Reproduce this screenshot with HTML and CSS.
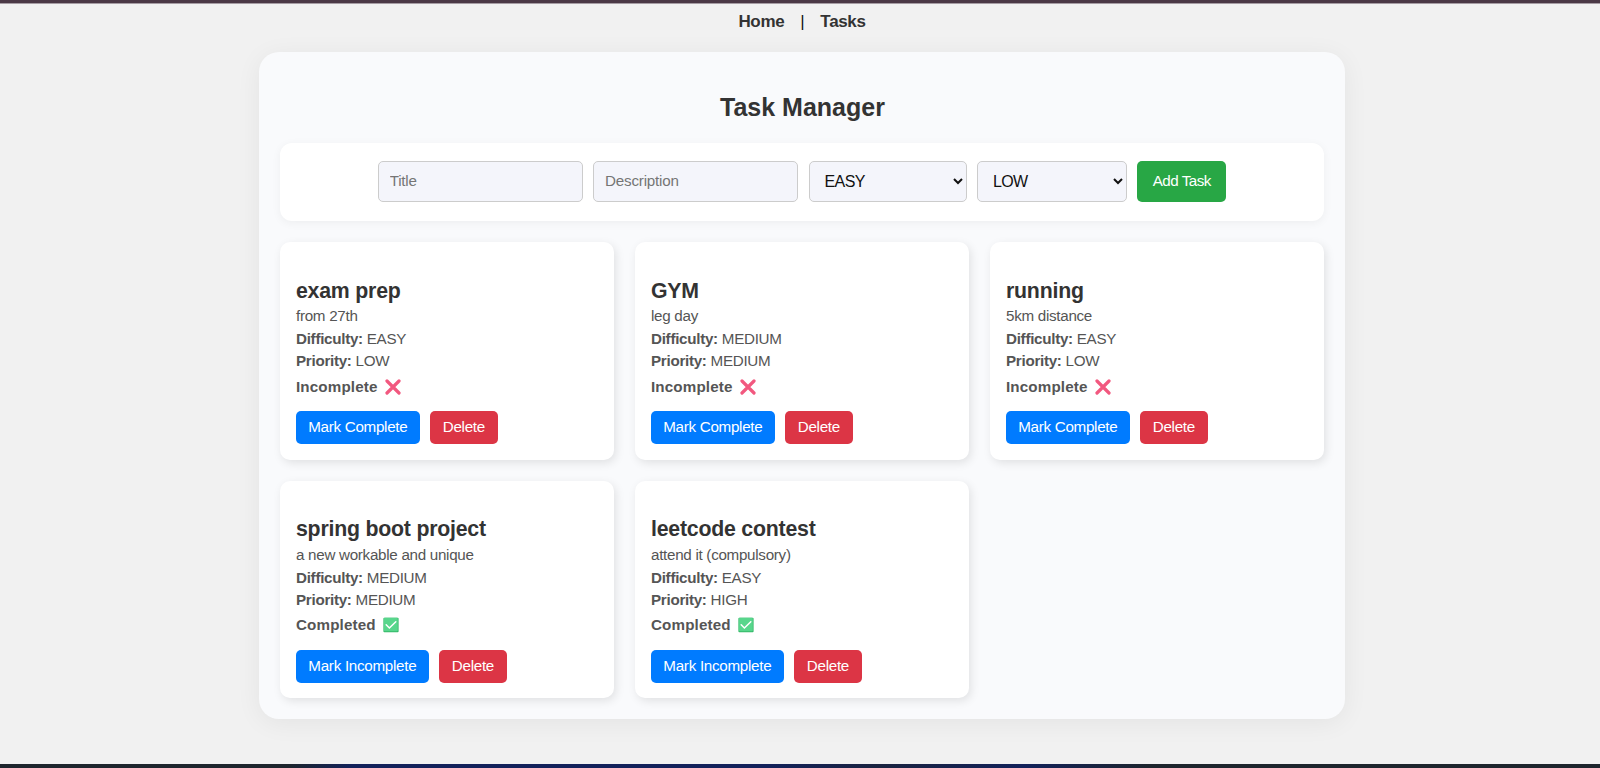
FILE: index.html
```html
<!DOCTYPE html>
<html lang="en">
<head>
<meta charset="utf-8">
<title>Task Manager</title>
<link rel="stylesheet" href="styles.css">
</head>
<body>
<svg class="symbols" aria-hidden="true">
  <symbol id="cross" viewBox="0 0 16 16"><path d="M2 2 14 14M14 2 2 14" fill="none" stroke="#f2587f" stroke-width="3.2" stroke-linecap="round"/></symbol>
  <symbol id="check" viewBox="0 0 16 16"><rect x=".4" y=".8" width="15.2" height="14.4" rx="1" fill="#35b869"/><rect x=".9" y=".8" width="13.9" height="13.4" rx="1" fill="#58d68c"/><path d="M3.2 7.8 6.4 11 12.8 4.8" fill="none" stroke="#fff" stroke-width="1.5" stroke-linecap="round"/></symbol>
</svg>
<div class="top-edge"></div>
<nav class="nav"><a>Home</a><span>|</span><a>Tasks</a></nav>
<main class="panel">
  <h2 class="title">Task Manager</h2>
  <form class="form">
    <input class="field text" placeholder="Title">
    <input class="field text" placeholder="Description">
    <select class="field difficulty"><option>EASY</option></select>
    <select class="field priority"><option>LOW</option></select>
    <button class="add" type="button">Add Task</button>
  </form>
  <section class="grid">
    <article class="card">
      <h3>exam prep</h3>
      <p>from 27th</p>
      <p><strong>Difficulty:</strong> EASY</p>
      <p><strong>Priority:</strong> LOW</p>
      <p class="status">Incomplete <svg class="icon"><use href="#cross"/></svg></p>
      <div class="actions"><button class="btn mark">Mark Complete</button><button class="btn delete">Delete</button></div>
    </article>
    <article class="card">
      <h3>GYM</h3>
      <p>leg day</p>
      <p><strong>Difficulty:</strong> MEDIUM</p>
      <p><strong>Priority:</strong> MEDIUM</p>
      <p class="status">Incomplete <svg class="icon"><use href="#cross"/></svg></p>
      <div class="actions"><button class="btn mark">Mark Complete</button><button class="btn delete">Delete</button></div>
    </article>
    <article class="card">
      <h3>running</h3>
      <p>5km distance</p>
      <p><strong>Difficulty:</strong> EASY</p>
      <p><strong>Priority:</strong> LOW</p>
      <p class="status">Incomplete <svg class="icon"><use href="#cross"/></svg></p>
      <div class="actions"><button class="btn mark">Mark Complete</button><button class="btn delete">Delete</button></div>
    </article>
    <article class="card">
      <h3>spring boot project</h3>
      <p>a new workable and unique</p>
      <p><strong>Difficulty:</strong> MEDIUM</p>
      <p><strong>Priority:</strong> MEDIUM</p>
      <p class="status">Completed <svg class="icon"><use href="#check"/></svg></p>
      <div class="actions"><button class="btn mark undo">Mark Incomplete</button><button class="btn delete">Delete</button></div>
    </article>
    <article class="card">
      <h3>leetcode contest</h3>
      <p>attend it (compulsory)</p>
      <p><strong>Difficulty:</strong> EASY</p>
      <p><strong>Priority:</strong> HIGH</p>
      <p class="status">Completed <svg class="icon"><use href="#check"/></svg></p>
      <div class="actions"><button class="btn mark undo">Mark Incomplete</button><button class="btn delete">Delete</button></div>
    </article>
  </section>
</main>
<div class="bottom-edge"></div>
</body>
</html>
```
FILE: styles.css
```css
* { box-sizing: border-box; }
body {
  margin: 0;
  height: 768px;
  overflow: hidden;
  display: flex;
  flex-direction: column;
  align-items: center;
  background: #f1f1f1;
  font-family: "Liberation Sans", Arial, sans-serif;
  color: #333;
}
.symbols { position: absolute; width: 0; height: 0; }
.top-edge { width: 100%; height: 4px; flex: none; background: #4b3946; border-bottom: 1px solid #a69da4; }
.nav {
  height: 48px;
  padding-top: 8px;
  display: flex;
  gap: 16px;
  font-size: 17px;
  letter-spacing: -.35px;
  line-height: 20px;
  font-weight: bold;
  padding-left: 4px;
}
.nav span { font-weight: normal; color: #111; }
.panel {
  width: 1086px;
  height: 667px;
  flex: none;
  margin-left: 4px;
  padding: 39px 21px 21px;
  border-radius: 20px;
  background: #f9fafc;
  box-shadow: 0 4px 26px rgba(0, 0, 0, .06);
}
.title { margin: 0 0 20px; padding-left: 1px; height: 32px; line-height: 32px; text-align: center; font-size: 25px; }
.form {
  height: 78px;
  margin-bottom: 21px;
  padding-top: 18px;
  display: flex;
  justify-content: center;
  gap: 10.4px;
  border-radius: 12px;
  background: #fff;
  box-shadow: 0 2px 10px rgba(0, 0, 0, .05);
}
.field {
  height: 41px;
  border: 1px solid #ccc;
  border-radius: 5px;
  background: #f4f5fb;
  color: #111;
  font: 16px "Liberation Sans", Arial, sans-serif;
  letter-spacing: -.6px;
}
.text { width: 205px; padding: 0 11px 2px; font-size: 15.2px; letter-spacing: -.22px; }
.text::placeholder { color: #757575; }
.difficulty { width: 158px; padding: 0 11px; }
.priority { width: 150px; padding: 0 11px; }
.add {
  width: 89px;
  height: 41px;
  padding: 0 0 2px;
  border: 0;
  border-radius: 5px;
  background: #28a745;
  color: #fff;
  font: 15.2px "Liberation Sans", Arial, sans-serif;
  letter-spacing: -.5px;
}
.grid { display: grid; grid-template-columns: repeat(3, 1fr); gap: 21px; }
.card {
  height: 218px;
  padding: 36px 16px 0;
  border-radius: 10px;
  background: #fff;
  box-shadow: 2px 3px 10px rgba(0, 0, 0, .1);
}
.card:nth-child(n + 4) { height: 217px; padding-top: 35px; }
.card h3 { margin: 0 0 1px; font-size: 21.3px; letter-spacing: -.22px; line-height: 26px; }
.card:nth-child(n + 4) h3 { margin-bottom: 2px; }
.card p { margin: 0; font-size: 15.2px; letter-spacing: -.29px; line-height: 22.6px; color: #555; }
.card .status { display: flex; align-items: center; gap: 7.5px; height: 22px; margin-top: 4px; font-weight: bold; letter-spacing: .14px; }
.card:nth-child(n + 4) .status { margin-top: 3px; }
.icon { width: 16px; height: 16px; margin-top: -1px; }
.actions { display: flex; gap: 10.5px; margin-top: 12.6px; }
.card:nth-child(n + 4) .actions { margin-top: 13.6px; }
.btn {
  width: 67.5px;
  height: 33px;
  padding: 0 0 2px;
  border: 0;
  border-radius: 5px;
  color: #fff;
  font: 15.2px "Liberation Sans", Arial, sans-serif;
  letter-spacing: -.28px;
}
.mark { width: 123.6px; background: #007bff; }
.undo { width: 132.7px; }
.delete { background: #dc3545; }
.bottom-edge { width: 100%; height: 4px; margin-top: auto; flex: none; background: linear-gradient(90deg, #1d252d 18%, #12215a 22%, #12215a 48%, #1a2340 55%, #12215a 64%, #1d252d 72%); }
```
